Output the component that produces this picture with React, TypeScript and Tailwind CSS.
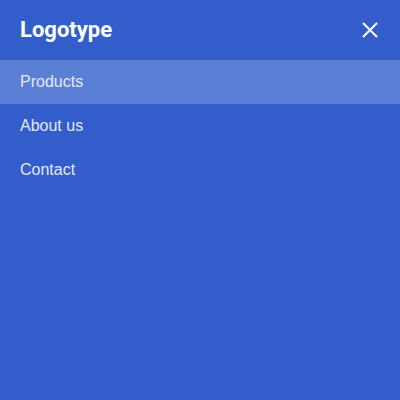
import React from "react";

export default function App() {
  return (
    <div className="w-[400px] h-[400px] bg-[#335dcb] flex flex-col">
      <div className="h-[60px] flex items-center justify-between pl-5 pr-[22px]">
        <span className="text-white text-[22px] font-bold leading-none" style={{ fontFamily: 'Roboto, sans-serif' }}>Logotype</span>
        <svg width="16" height="16" viewBox="0 0 16 16">
          <path d="M1 1 L15 15 M15 1 L1 15" stroke="white" strokeWidth="2" fill="none" />
        </svg>
      </div>
      <nav className="flex flex-col text-[16px] text-[#e3e9f8]" style={{ fontFamily: '"Liberation Sans", Arial, sans-serif' }}>
        <a className="h-[44px] flex items-center px-5 bg-[#5c7fd6]">Products</a>
        <a className="h-[44px] flex items-center px-5">About us</a>
        <a className="h-[44px] flex items-center px-5">Contact</a>
      </nav>
    </div>
  );
}
